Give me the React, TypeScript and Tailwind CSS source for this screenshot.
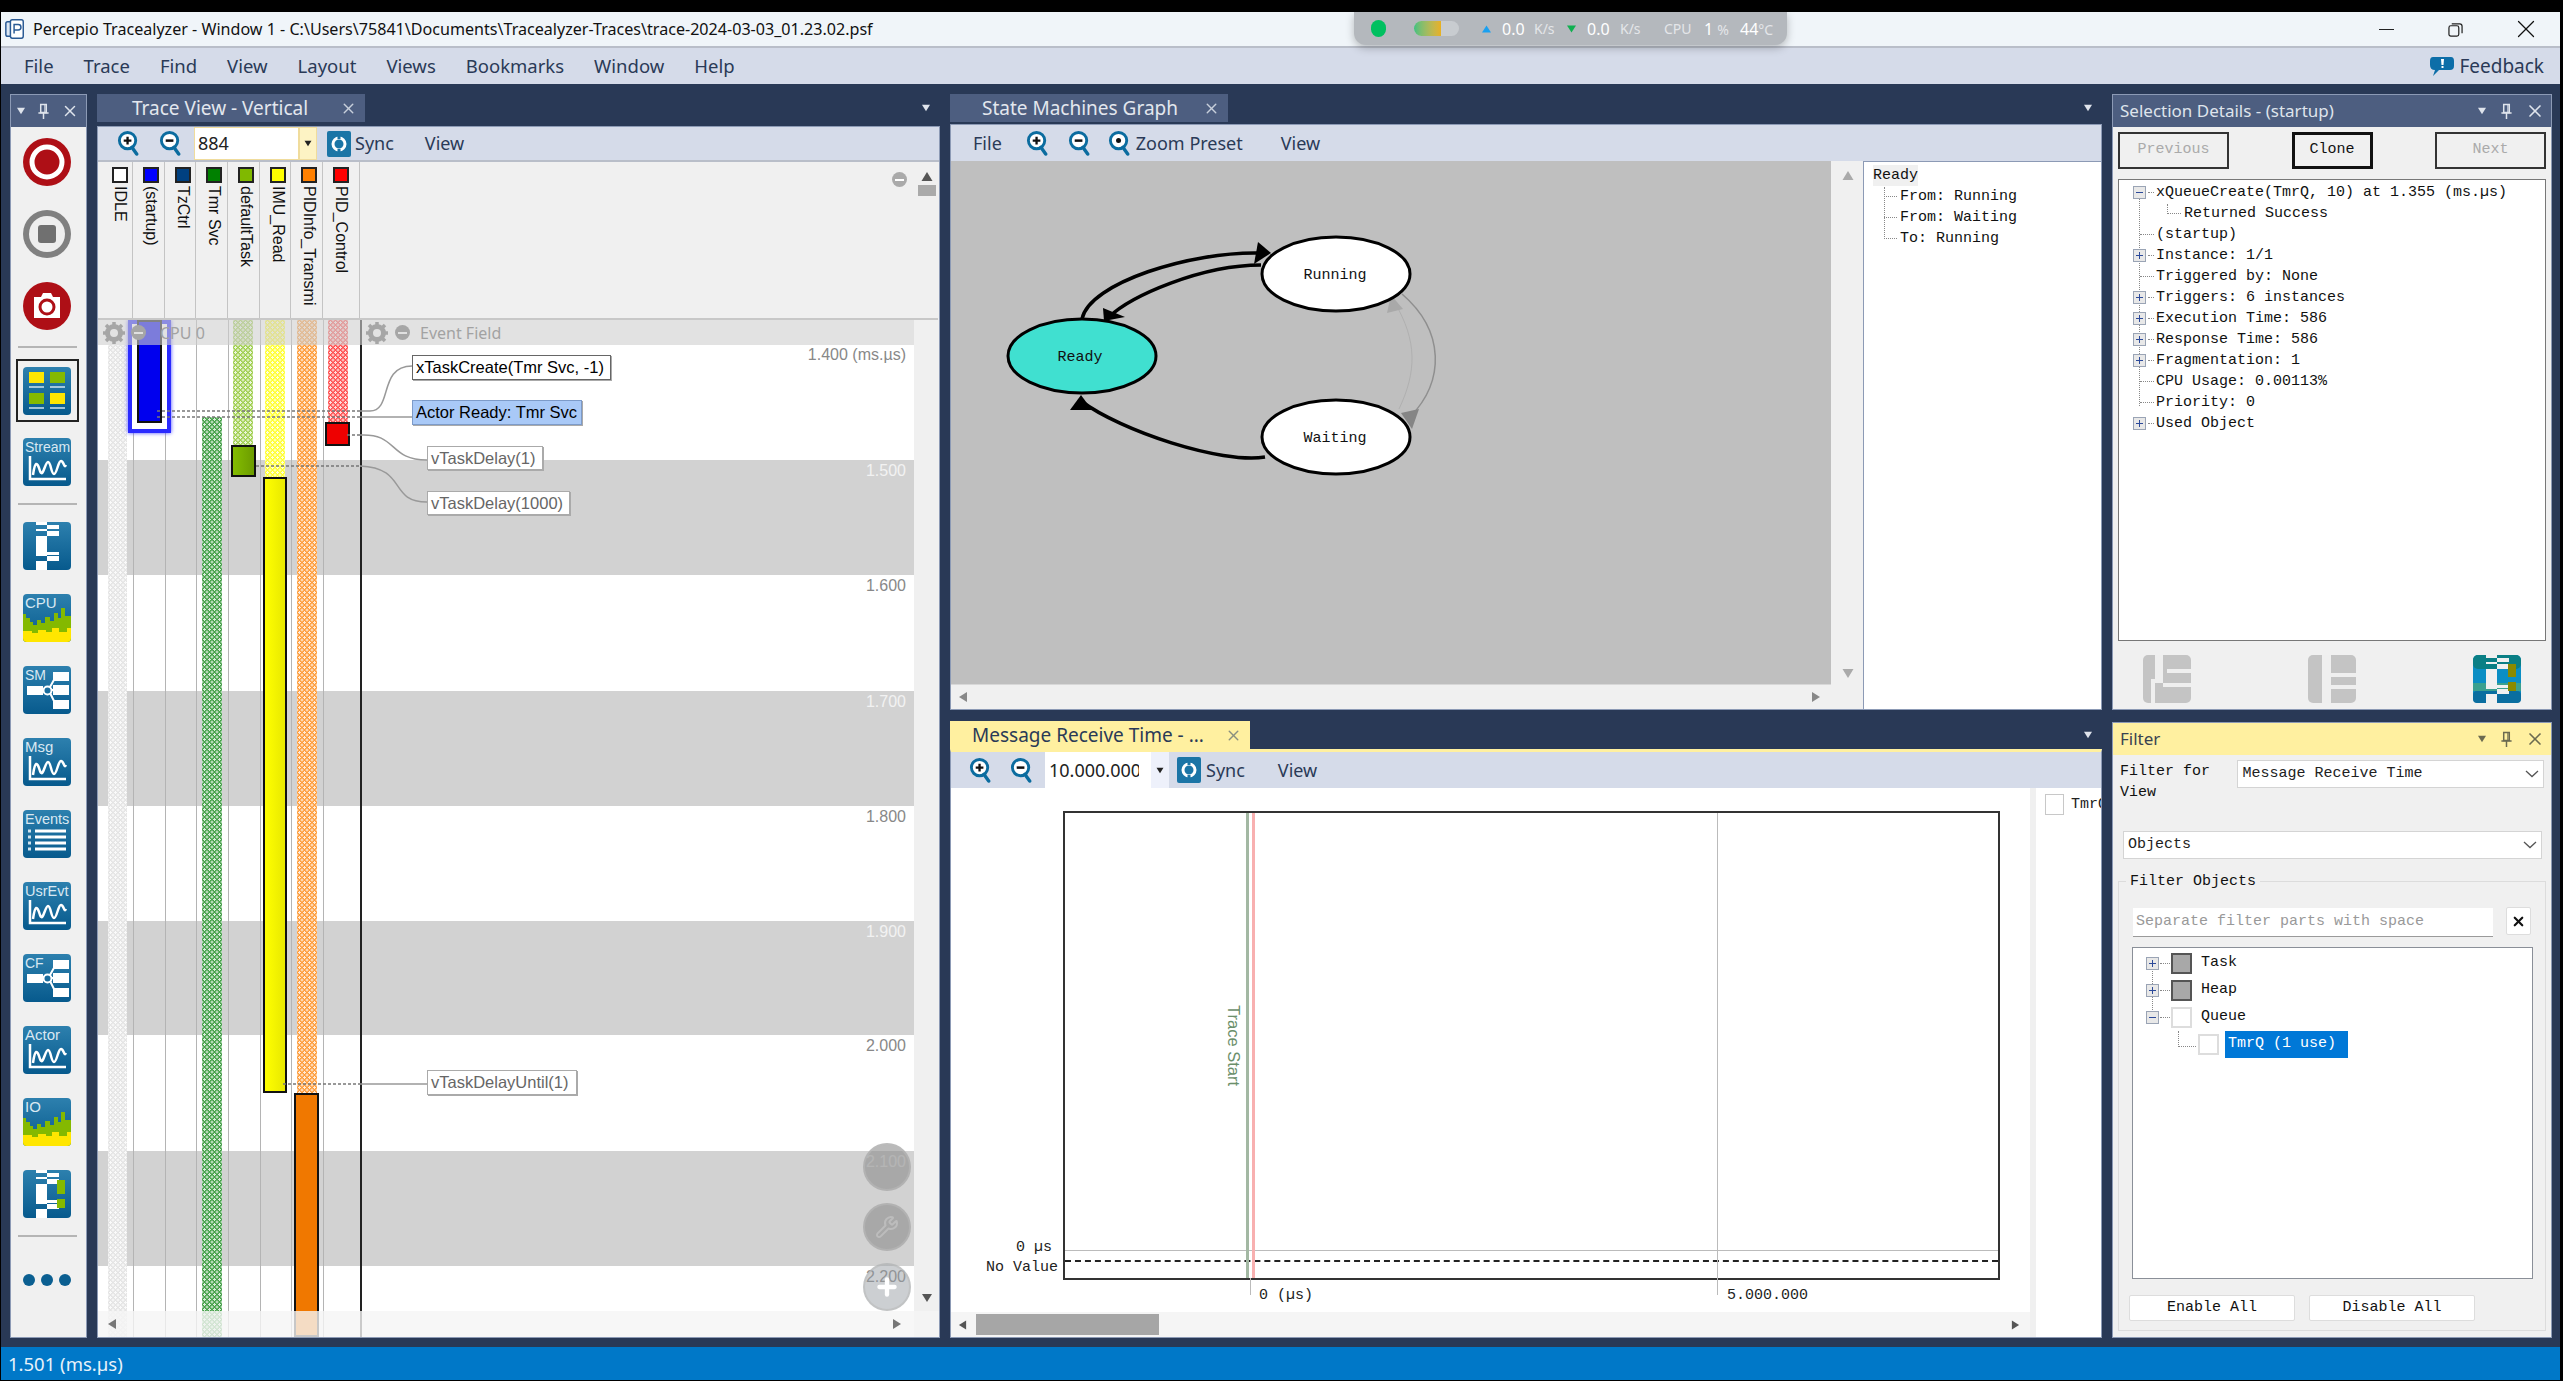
import React from 'react'
import { X, Wrench, Plus } from 'lucide-react'

const UI = "font-['Noto_Sans',sans-serif]"
const MONO = "font-['Liberation_Mono',monospace]"
const ARIAL = "font-['Liberation_Sans',Arial,sans-serif]"

function Tri({ dir, className }: { dir: 'up' | 'down' | 'left' | 'right'; className?: string }) {
  const pts = { up: '5,1 10,9 0,9', down: '0,1 10,1 5,9', left: '9,0 9,10 1,5', right: '1,0 1,10 9,5' }[dir]
  return (
    <svg viewBox="0 0 10 10" className={className} fill="currentColor">
      <polygon points={pts} />
    </svg>
  )
}

function PinIcon() {
  return (
    <svg viewBox="0 0 14 18" className="w-[13px] h-[17px]" fill="none" stroke="currentColor" strokeWidth="1.6">
      <path d="M4 1.5H10V10H4Z" />
      <path d="M1.5 10.5H12.5M7 10.5V17" />
      <path d="M8.5 2V10" strokeWidth="1.2" />
    </svg>
  )
}

function ZoomIcon({ kind }: { kind: 'plus' | 'minus' | 'dot' }) {
  return (
    <svg viewBox="0 0 24 26" className="w-[24px] h-[25px] shrink-0">
      <circle cx="10.5" cy="10" r="8.5" fill="#fff" stroke="#0b6c9f" strokeWidth="3" />
      <path d="M15 17 L20 24" stroke="#0b6c9f" strokeWidth="3.5" strokeLinecap="round" />
      {kind === 'plus' && <path d="M6.5 10h8M10.5 6v8" stroke="#111" strokeWidth="2.4" />}
      {kind === 'minus' && <path d="M6.5 10h8" stroke="#111" strokeWidth="2.6" />}
      {kind === 'dot' && <circle cx="10.5" cy="10" r="2.6" fill="#111" />}
    </svg>
  )
}

function SyncIcon() {
  return (
    <svg viewBox="0 0 24 26" className="w-[24px] h-[26px] shrink-0">
      <rect width="24" height="26" rx="2" fill="#1b75a6" />
      <circle cx="12" cy="13" r="6" fill="none" stroke="#fff" strokeWidth="3" />
      <path d="M12 3v5M12 18v5" stroke="#1b75a6" strokeWidth="3" />
    </svg>
  )
}

function Tile({ children, id = 'tile' }: { children?: React.ReactNode; id?: string }) {
  return (
    <svg viewBox="0 0 48 48" className="w-[48px] h-[48px] shrink-0 block">
      <defs>
        <linearGradient id={id} x1="0" y1="0" x2="0" y2="1">
          <stop offset="0" stopColor="#2d80ae" />
          <stop offset="1" stopColor="#075a8d" />
        </linearGradient>
      </defs>
      <rect width="48" height="48" rx="4" fill={`url(#${id})`} />
      {children}
    </svg>
  )
}

function Label({ t, size = 15 }: { t: string; size?: number }) {
  return (
    <text x="2" y="14" fontSize={size} fill="#d9e8f2" fontFamily="Liberation Sans, Arial, sans-serif">
      {t}
    </text>
  )
}

function Wave() {
  return (
    <g fill="none" stroke="#fff" strokeWidth="2.5">
      <path d="M7 18V41H43" />
      <path d="M10 37C12 23 14 23 17 33C20 41 22 24 25 24C28 24 28 36 31 36C34 36 35 23 38 23C41 23 41 31 43 27" />
    </g>
  )
}

function FlowTile({ t }: { t: string }) {
  return (
    <Tile>
      <Label t={t} size={14} />
      <g fill="#fff">
        <rect x="30" y="6" width="16" height="9" />
        <rect x="30" y="19" width="16" height="10" />
        <rect x="30" y="34" width="16" height="9" />
        <rect x="4" y="20" width="16" height="9" />
      </g>
      <circle cx="24.5" cy="24.5" r="4" fill="none" stroke="#fff" strokeWidth="2" />
      <path d="M27 21L32 12M28 24H31M27 27L32 37" stroke="#fff" strokeWidth="2" />
    </Tile>
  )
}

function TraceMark({ light = false }: { light?: boolean }) {
  return (
    <g fill={light ? '#f0f0f0' : '#fff'}>
      <rect x="13" y="0" width="11" height="3" />
      <rect x="24" y="3" width="12" height="4" />
      <rect x="13" y="7" width="11" height="2" />
      <rect x="24" y="9" width="12" height="5" />
      <rect x="13" y="14" width="11" height="12" />
      <rect x="24" y="30" width="12" height="3" />
      <rect x="13" y="26" width="11" height="8" />
      <rect x="24" y="34" width="12" height="5" />
      <rect x="13" y="39" width="11" height="9" />
    </g>
  )
}

function LoadTile({ t }: { t: string }) {
  return (
    <Tile>
      <Label t={t} />
      <path
        d="M0 20H3V24H7V28H10V31H14V26H18V29H22V23H27V27H31V19H35V24H38V14H42V22H48V44Q48 48 44 48H4Q0 48 0 44Z"
        fill="#84b900"
      />
      <path
        d="M0 37H9V39H15V36H23V38H29V34H36V38H44V34H48V44Q48 48 44 48H4Q0 48 0 44Z"
        fill="#ffe600"
      />
    </Tile>
  )
}

function RoundRed({ children, grey }: { children: React.ReactNode; grey?: boolean }) {
  return (
    <svg viewBox="0 0 48 48" className="w-[48px] h-[48px] shrink-0 block">
      <circle cx="24" cy="24" r="24" fill={grey ? '#808080' : '#ae0f16'} />
      {children}
    </svg>
  )
}

function Sep() {
  return <div className="w-[59px] h-[2px] bg-[#b5b5b5]" />
}

function Rail() {
  return (
    <div className="w-[77px] flex flex-col border border-[#8c9ab5] bg-[#f0f0f0]">
      <div className="h-[32px] bg-[#4d5e80] flex items-center justify-center gap-[11px] pr-[3px] text-[#dfe4ec]">
        <Tri dir="down" className="w-[10px] h-[8px]" />
        <PinIcon />
        <X size={18} />
      </div>
      <div className="flex flex-col items-center pt-[11px] pr-[3px]">
        <div className="flex flex-col gap-[24px]">
          <RoundRed>
            <circle cx="24" cy="24" r="15" fill="none" stroke="#fff" strokeWidth="5" />
          </RoundRed>
          <RoundRed grey>
            <circle cx="24" cy="24" r="18" fill="#eee" />
            <rect x="15" y="15" width="18" height="18" rx="3" fill="#707070" />
          </RoundRed>
          <RoundRed>
            <path d="M11 15H18L20 11H28L30 15H37V36H11Z" fill="#fff" />
            <circle cx="24" cy="25" r="7" fill="none" stroke="#ae0f16" strokeWidth="3" />
          </RoundRed>
        </div>
        <div className="mt-[16px]"><Sep /></div>
        <div className="mt-[11px] border-2 border-[#222] w-[63px] h-[63px] flex items-center justify-center">
          <Tile>
            <rect x="6" y="5" width="15" height="11" fill="#ffe600" />
            <rect x="27" y="5" width="15" height="11" fill="#84b900" />
            <rect x="6" y="26" width="15" height="11" fill="#84b900" />
            <rect x="27" y="26" width="15" height="11" fill="#ffe600" />
            <path d="M6 20H21M27 20H42M6 41H21M27 41H42" stroke="#cfe3ee" strokeWidth="1.5" />
          </Tile>
        </div>
        <div className="mt-[16px]">
          <Tile><Label t="Stream" size={14} /><Wave /></Tile>
        </div>
        <div className="mt-[17px]"><Sep /></div>
        <div className="mt-[17px] flex flex-col gap-[24px]">
          <Tile><TraceMark /></Tile>
          <LoadTile t="CPU" />
          <FlowTile t="SM" />
          <Tile><Label t="Msg" /><Wave /></Tile>
          <Tile>
            <Label t="Events" size={14.5} />
            <path d="M12 21H43M12 27H43M12 33H43M12 39H43" stroke="#fff" strokeWidth="3" />
            <path d="M5 21H8M5 27H8M5 33H8M5 39H8" stroke="#cfe3ee" strokeWidth="3" />
          </Tile>
          <Tile><Label t="UsrEvt" size={14.5} /><Wave /></Tile>
          <FlowTile t="CF" />
          <Tile><Label t="Actor" /><Wave /></Tile>
          <LoadTile t="IO" />
          <Tile>
            <TraceMark />
            <rect x="34" y="10" width="8" height="14" fill="#84b900" />
            <rect x="34" y="29" width="8" height="9" fill="#84b900" />
          </Tile>
        </div>
        <div className="mt-[17px]"><Sep /></div>
        <div className="mt-[37px] flex gap-[6px]">
          <div className="w-[12px] h-[12px] rounded-full bg-[#0b5f91]" />
          <div className="w-[12px] h-[12px] rounded-full bg-[#0b5f91]" />
          <div className="w-[12px] h-[12px] rounded-full bg-[#0b5f91]" />
        </div>
      </div>
    </div>
  )
}

function TabStrip({ title, tabWidth, yellow, closePad }: { title: string; tabWidth: string; yellow?: boolean; closePad: string }) {
  return (
    <div className="h-[28px] flex items-stretch justify-between shrink-0">
      <div
        className={`${tabWidth} flex items-center justify-between ${closePad} text-[19px] ${UI} ${
          yellow ? 'bg-[#fff0a0] text-[#2a3a57]' : 'bg-[#4d5e80] text-[#e3e7ee]'
        }`}
      >
        <span className="whitespace-nowrap">{title}</span>
        <X size={17} className={yellow ? 'text-[#8a8f80]' : 'text-[#c8cfdb]'} />
      </div>
      <div className="flex items-center pr-[9px] text-[#dfe4ec]">
        <Tri dir="down" className="w-[10px] h-[8px]" />
      </div>
    </div>
  )
}

const columns = [
  { name: 'IDLE', swatch: 'bg-white', width: 'w-[35px]', pad: 'pl-[14px]' },
  { name: '(startup)', swatch: 'bg-[#0000ff]', width: 'w-[32px]', pad: 'pl-[10px]' },
  { name: 'TzCtrl', swatch: 'bg-[#004080]', width: 'w-[31px]', pad: 'pl-[10px]' },
  { name: 'Tmr Svc', swatch: 'bg-[#008000]', width: 'w-[32px]', pad: 'pl-[10px]' },
  { name: 'defaultTask', swatch: 'bg-[#80b900]', width: 'w-[32px]', pad: 'pl-[10px]' },
  { name: 'IMU_Read', swatch: 'bg-[#ffff00]', width: 'w-[31px]', pad: 'pl-[10px]' },
  { name: 'PIDInfo_Transmi', swatch: 'bg-[#ff8000]', width: 'w-[32px]', pad: 'pl-[10px]' },
  { name: 'PID_Control', swatch: 'bg-[#ff0000]', width: 'w-[37px]', pad: 'pl-[10px]' },
]

const bands = [
  { h: 'h-[140px] pt-[25px]', grey: false, label: '1.400 (ms.µs)' },
  { h: 'h-[115px] pt-px', grey: true, label: '1.500' },
  { h: 'h-[116px] pt-px', grey: false, label: '1.600' },
  { h: 'h-[115px] pt-px', grey: true, label: '1.700' },
  { h: 'h-[115px] pt-px', grey: false, label: '1.800' },
  { h: 'h-[114px] pt-px', grey: true, label: '1.900' },
  { h: 'h-[116px] pt-px', grey: false, label: '2.000' },
  { h: 'h-[115px] pt-px', grey: true, label: '2.100' },
  { h: 'flex-1 pt-px', grey: false, label: '2.200' },
]

const DOTS =
  'bg-[radial-gradient(circle,rgba(255,255,255,0.8)_1px,transparent_1.3px),radial-gradient(circle,rgba(255,255,255,0.8)_1px,transparent_1.3px)] bg-[length:5px_5px] bg-[position:0_0,2.5px_2.5px]'

const dotBars = [
  { c: 'left-[10px] top-[25px] w-[19px] h-[992px] bg-[#e4e4e4]' },
  { c: 'left-[104px] top-[97px] w-[20px] h-[920px] bg-[#43a047]' },
  { c: 'left-[135px] top-0 w-[20px] h-[125px] bg-[#a0cf50]' },
  { c: 'left-[167px] top-0 w-[20px] h-[157px] bg-[#ffff30]' },
  { c: 'left-[199px] top-0 w-[20px] h-[773px] bg-[#ff9c3a]' },
  { c: 'left-[230px] top-0 w-[20px] h-[102px] bg-[#ff5050]' },
]

const lines = [
  'left-[35px]', 'left-[67px]', 'left-[98px]', 'left-[130px]', 'left-[162px]', 'left-[193px]', 'left-[225px]',
]

function TaskLabel({ text, className }: { text: string; className: string }) {
  return (
    <div className={`absolute flex items-center pl-[3px] text-[16.5px] whitespace-nowrap border shadow-[1px_1px_0_#aaa] ${ARIAL} ${className}`}>
      {text}
    </div>
  )
}

function TracePanel() {
  return (
    <div className="w-[843px] flex flex-col">
      <TabStrip title="Trace View - Vertical" tabWidth="w-[268px]" closePad="pl-[35px] pr-[8px]" />
      <div className="flex-1 flex flex-col mt-[4px] border border-[#8c9ab5] bg-[#f0f0f0] relative min-h-0">
        <div className={`h-[35px] shrink-0 bg-[#d5dbe9] border-b-2 border-[#b9bec9] flex items-center text-[#2a3a57] text-[18px] ${UI}`}>
          <div className="ml-[19px]"><ZoomIcon kind="plus" /></div>
          <div className="ml-[18px]"><ZoomIcon kind="minus" /></div>
          <div className="ml-[11px] w-[105px] h-full bg-white border border-[#f0dc9c] flex items-center pl-[3px] text-[#222]">884</div>
          <div className="w-[18px] h-full bg-[#fdf3c4] border border-[#f0dc9c] flex items-center justify-center text-[#222]">
            <Tri dir="down" className="w-[8px] h-[7px]" />
          </div>
          <div className="ml-[10px]"><SyncIcon /></div>
          <span className="ml-[4px]">Sync</span>
          <span className="ml-[31px]">View</span>
        </div>
        <div className="h-[158px] shrink-0 flex border-b-2 border-[#c8c8c8] mr-[1px]">
          {columns.map((c) => (
            <div key={c.name} className={`${c.width} ${c.pad} shrink-0 border-r border-[#c4c4c4] pt-[5px] flex flex-col`}>
              <div className={`w-[16px] h-[16px] border-2 border-[#222] ${c.swatch}`} />
              <div className={`mt-[3px] [writing-mode:vertical-rl] w-[16px] text-[16px] leading-[16px] whitespace-nowrap text-[#111] ${ARIAL}`}>
                {c.name}
              </div>
            </div>
          ))}
          <div className="flex-1 relative">
            <div className="absolute top-[10px] right-[31px] w-[15px] h-[15px] rounded-full bg-[#aaa] flex items-center justify-center">
              <div className="w-[9px] h-[2px] bg-white" />
            </div>
          </div>
        </div>
        <div className="flex-1 flex min-h-0">
          <div className="w-[816px] relative overflow-hidden bg-white">
            <div className="h-full flex flex-col">
              {bands.map((b) => (
                <div
                  key={b.label}
                  className={`${b.h} shrink-0 text-right pr-[8px] text-[16px] leading-[20px] ${ARIAL} ${b.grey ? 'bg-[#d2d2d2] text-[#f2f2f2]' : 'text-[#888]'}`}
                >
                  {b.label}
                </div>
              ))}
            </div>
            {lines.map((l) => (
              <div key={l} className={`absolute top-0 bottom-0 w-px bg-[#b4b4b4] ${l}`} />
            ))}
            {dotBars.map((d) => (
              <div key={d.c} className={`absolute ${d.c} ${DOTS}`} />
            ))}
            <div className="absolute left-[30px] top-0 w-[43px] h-[113px] bg-white border-[4px] border-[#2a2aff] shadow-[0_0_4px_#4a4aff]" />
            <div className="absolute left-[39px] top-0 w-[25px] h-[103px] bg-[#0000ee] border-2 border-[#111]" />
            <div className="absolute left-[133px] top-[125px] w-[25px] h-[32px] border-2 border-[#111] bg-gradient-to-r from-[#84bd00] to-[#6c9c00]" />
            <div className="absolute left-[165px] top-[157px] w-[24px] h-[616px] border-2 border-[#111] bg-gradient-to-r from-[#ffff00] to-[#e8e800]" />
            <div className="absolute left-[196px] top-[773px] w-[25px] h-[244px] border-2 border-[#111] bg-[#f07800]" />
            <div className="absolute left-[227px] top-[102px] w-[25px] h-[24px] border-2 border-[#111] bg-[#ee0000]" />
            <div className="absolute left-[262px] top-0 bottom-0 w-[2px] bg-[#222]" />
            <svg className="absolute left-0 top-0 w-[816px] h-[1017px]" fill="none" strokeWidth="1.5">
              <g stroke="#777" strokeDasharray="3 2">
                <path d="M59 91H262M59 97H262M249 115H262M158 146H262M185 764H262" />
              </g>
              <g stroke="#999">
                <path d="M262 91H272C295 91 280 46 314 46" />
                <path d="M262 97H314" />
                <path d="M262 115C300 113 290 140 329 140" />
                <path d="M262 146C310 148 290 182 329 182" />
                <path d="M262 764H329" />
              </g>
            </svg>
            <TaskLabel text="xTaskCreate(Tmr Svc, -1)" className="left-[314px] top-[35px] w-[199px] h-[25px] bg-white border-[#666] text-black" />
            <TaskLabel text="Actor Ready: Tmr Svc" className="left-[314px] top-[80px] w-[170px] h-[25px] bg-[#a9c9f7] border-[#7d9bc9] text-black" />
            <TaskLabel text="vTaskDelay(1)" className="left-[329px] top-[126px] w-[116px] h-[24px] bg-white border-[#aaa] text-[#666]" />
            <TaskLabel text="vTaskDelay(1000)" className="left-[329px] top-[171px] w-[143px] h-[24px] bg-white border-[#aaa] text-[#666]" />
            <TaskLabel text="vTaskDelayUntil(1)" className="left-[329px] top-[750px] w-[150px] h-[25px] bg-white border-[#aaa] text-[#666]" />
            <div className={`absolute left-0 top-0 w-full h-[25px] bg-[#cfcfcf]/60 flex items-center text-[#a2a2a2] text-[16px] ${UI}`}>
              <Gear left="left-[3px]" />
              <Dash left="left-[33px]" />
              <span className="absolute left-[62px]">CPU 0</span>
              <Gear left="left-[266px]" />
              <Dash left="left-[297px]" />
              <span className="absolute left-[322px]">Event Field</span>
            </div>
            <div className="absolute left-[765px] top-[823px] w-[48px] h-[48px] rounded-full bg-[#8c8c8c]/60 border-2 border-[#bbb]/50" />
            <div className="absolute left-[765px] top-[883px] w-[48px] h-[48px] rounded-full bg-[#8c8c8c]/60 border-2 border-[#bbb]/50 flex items-center justify-center text-[#bcbcbc]">
              <Wrench size={24} />
            </div>
            <div className="absolute left-[765px] top-[943px] w-[48px] h-[48px] rounded-full bg-[#9aa0a6]/50 border-2 border-[#bbb]/60 flex items-center justify-center text-white">
              <Plus size={26} strokeWidth={4} />
            </div>
          </div>
          <div className="flex-1 relative">
            <Tri dir="up" className="absolute left-[7px] -top-[149px] w-[12px] h-[11px] text-[#555]" />
            <div className="absolute left-[4px] -top-[135px] w-[18px] h-[11px] bg-[#aaa]" />
            <Tri dir="down" className="absolute left-[7px] top-[973px] w-[12px] h-[10px] text-[#555]" />
          </div>
        </div>
        <div className="absolute left-0 right-0 bottom-0 h-[26px] bg-[#f5f5f5]/80 flex items-center justify-between px-[9px] text-[#777]">
          <Tri dir="left" className="w-[10px] h-[14px]" />
          <Tri dir="right" className="w-[10px] h-[14px] mr-[28px]" />
        </div>
      </div>
    </div>
  )
}

function Gear({ left }: { left: string }) {
  return (
    <svg viewBox="0 0 24 24" className={`absolute ${left} w-[26px] h-[24px]`}>
      <circle cx="12" cy="12" r="6.5" fill="none" stroke="#a6a6a6" strokeWidth="5" />
      <path d="M12 1v5M12 18v5M1 12h5M18 12h5M4 4l4 4M16 16l4 4M20 4l-4 4M8 16l-4 4" stroke="#a6a6a6" strokeWidth="3.5" />
    </svg>
  )
}

function Dash({ left }: { left: string }) {
  return (
    <div className={`absolute ${left} w-[15px] h-[15px] rounded-full bg-[#a6a6a6] flex items-center justify-center`}>
      <div className="w-[9px] h-[2px] bg-[#e0e0e0]" />
    </div>
  )
}

function StateGraph() {
  return (
    <svg className="w-[880px] h-[523px] block" fill="none">
      <g stroke="#000" strokeWidth="3.5">
        <path d="M131 158C138 122 240 90 310 92" />
        <path d="M310 104C250 104 180 135 158 156" />
        <path d="M314 296C270 303 170 270 130 240" />
      </g>
      <g fill="#000">
        <polygon points="307,81 320,92 303,103" />
        <polygon points="152,147 174,156 153,160" />
        <polygon points="130,234 119,249 141,249" />
      </g>
      <path d="M448 248C466 210 466 180 444 142" stroke="#b0b0b0" strokeWidth="1" />
      <polygon points="440,134 436,152 452,148" fill="#a9a9a9" />
      <path d="M451 133C494 170 494 220 459 256" stroke="#8f8f8f" strokeWidth="1.5" />
      <polygon points="461,268 450,252 468,248" fill="#858585" />
      <ellipse cx="131" cy="195" rx="74" ry="37" fill="#40e0d0" stroke="#000" strokeWidth="3" />
      <ellipse cx="385" cy="113" rx="74" ry="37" fill="#fff" stroke="#000" strokeWidth="3" />
      <ellipse cx="385" cy="276" rx="74" ry="37" fill="#fff" stroke="#000" strokeWidth="3" />
      <g fill="#111" fontSize="15" fontFamily="Liberation Mono, monospace" textAnchor="middle">
        <text x="129" y="200">Ready</text>
        <text x="384" y="118">Running</text>
        <text x="384" y="281">Waiting</text>
      </g>
    </svg>
  )
}

function StatePanel() {
  return (
    <div className="h-[616px] shrink-0 flex flex-col">
      <TabStrip title="State Machines Graph" tabWidth="w-[278px]" closePad="pl-[32px] pr-[8px]" />
      <div className="mt-[2px] flex-1 flex flex-col border border-[#8c9ab5] min-h-0">
        <div className={`h-[36px] shrink-0 bg-[#d5dbe9] flex items-center text-[#2a3a57] text-[18px] ${UI}`}>
          <span className="ml-[22px]">File</span>
          <div className="ml-[24px]"><ZoomIcon kind="plus" /></div>
          <div className="ml-[18px]"><ZoomIcon kind="minus" /></div>
          <div className="ml-[16px]"><ZoomIcon kind="dot" /></div>
          <span className="ml-[4px]">Zoom Preset</span>
          <span className="ml-[38px]">View</span>
        </div>
        <div className="flex-1 flex min-h-0">
          <div className="w-[880px] flex flex-col shrink-0">
            <div className="h-[523px] bg-[#bfbfbf] shrink-0"><StateGraph /></div>
            <div className="flex-1 bg-[#f0f0f0] border-t border-[#d8d8d8] flex items-center justify-between px-[7px] text-[#888]">
              <Tri dir="left" className="w-[10px] h-[14px]" />
              <Tri dir="right" className="w-[10px] h-[14px] mr-[3px]" />
            </div>
          </div>
          <div className="w-[32px] shrink-0 bg-[#f0f0f0] relative text-[#aaa]">
            <Tri dir="up" className="absolute left-[11px] top-[9px] w-[12px] h-[11px]" />
            <Tri dir="down" className="absolute left-[11px] top-[507px] w-[12px] h-[11px]" />
          </div>
          <div className={`flex-1 bg-white border-l border-t border-[#8c9ab5] relative text-[15px] leading-[21px] text-[#111] ${MONO}`}>
            <div className="ml-[9px] mt-[3px] w-fit bg-[#f0f0f0]">Ready</div>
            <div className="absolute left-[20px] top-[25px] h-[52px] border-l border-dotted border-[#888]" />
            {['From: Running', 'From: Waiting', 'To: Running'].map((t) => (
              <div key={t} className="flex items-center pl-[20px]">
                <span className="w-[13px] border-t border-dotted border-[#888] mr-[3px]" />
                {t}
              </div>
            ))}
          </div>
        </div>
      </div>
    </div>
  )
}

function MessagePanel() {
  return (
    <div className="flex-1 flex flex-col min-h-0">
      <TabStrip title="Message Receive Time - ..." tabWidth="w-[300px]" yellow closePad="pl-[22px] pr-[8px]" />
      <div className="flex-1 flex flex-col border-x border-b border-[#8c9ab5] border-t-[3px] border-t-[#fff0a0] min-h-0">
        <div className={`h-[36px] shrink-0 bg-[#d5dbe9] flex items-center text-[#2a3a57] text-[18px] ${UI}`}>
          <div className="ml-[18px]"><ZoomIcon kind="plus" /></div>
          <div className="ml-[17px]"><ZoomIcon kind="minus" /></div>
          <div className="ml-[11px] w-[106px] h-full bg-white flex items-center pl-[4px] text-[#222]">
            <span className="w-[90px] overflow-hidden whitespace-nowrap">10.000.000</span>
          </div>
          <div className="w-[18px] h-full bg-[#eef1fb] flex items-center justify-center text-[#222]">
            <Tri dir="down" className="w-[8px] h-[7px]" />
          </div>
          <div className="ml-[8px]"><SyncIcon /></div>
          <span className="ml-[5px]">Sync</span>
          <span className="ml-[33px]">View</span>
        </div>
        <div className="flex-1 flex min-h-0">
          <div className="w-[1079px] shrink-0 flex flex-col">
            <div className="h-[524px] shrink-0 bg-white relative pt-[23px] pl-[112px]">
              <div className="w-[937px] h-[469px] border-2 border-[#333] relative">
                <div className="absolute left-0 right-0 top-[437px] h-px bg-[#bbb]" />
                <div className="absolute left-0 right-0 top-[447px] border-t-2 border-dashed border-[#222]" />
                <div className="absolute top-0 bottom-0 left-[181px] w-[3px] bg-[#a3b8a3]" />
                <div className="absolute top-0 bottom-0 left-[187px] w-[3px] bg-[#f8b0b0]" />
                <div className="absolute top-0 bottom-0 left-[652px] w-px bg-[#bbb]" />
                <div className={`absolute left-[159px] top-[192px] [writing-mode:vertical-rl] text-[16.5px] leading-[20px] text-[#6b8f6b] whitespace-nowrap ${ARIAL}`}>
                  Trace Start
                </div>
                <div className="absolute left-[185px] top-[465px] h-[17px] w-px bg-[#bbb]" />
                <div className="absolute left-[652px] top-[465px] h-[17px] w-px bg-[#bbb]" />
              </div>
              <div className={`absolute left-[20px] top-[450px] w-[93px] text-right text-[15px] leading-[20px] text-[#222] pr-[6px] ${MONO}`}>
                <div className="pr-[6px]">0 µs</div>
                <div>No Value</div>
              </div>
              <span className={`absolute left-[308px] top-[497px] text-[15px] text-[#222] ${MONO}`}>0 (µs)</span>
              <span className={`absolute left-[776px] top-[497px] text-[15px] text-[#222] ${MONO}`}>5.000.000</span>
            </div>
            <div className="flex-1 bg-[#f5f5f5] flex items-center text-[#555]">
              <Tri dir="left" className="ml-[7px] w-[9px] h-[14px]" />
              <div className="ml-[9px] w-[183px] h-[21px] bg-[#a6a6a6]" />
              <div className="flex-1" />
              <Tri dir="right" className="mr-[10px] w-[9px] h-[14px]" />
            </div>
          </div>
          <div className="w-[6px] shrink-0 bg-[#f0f0f0]" />
          <div className={`flex-1 bg-white flex items-start pt-[6px] pl-[9px] overflow-hidden text-[15px] whitespace-nowrap text-[#222] ${MONO}`}>
            <div className="w-[19px] h-[21px] shrink-0 border border-[#c8c8c8] mr-[7px]" />
            TmrQ
          </div>
        </div>
      </div>
    </div>
  )
}

function PanelHeader({ title, yellow }: { title: string; yellow?: boolean }) {
  return (
    <div
      className={`h-[32px] shrink-0 flex items-center justify-between pl-[7px] pr-[6px] text-[17px] ${UI} ${
        yellow ? 'bg-[#fff0a0] text-[#3a4350]' : 'bg-[#4d5e80] text-[#dfe4ec]'
      }`}
    >
      <span>{title}</span>
      <div className={`flex items-center gap-[12px] ${yellow ? 'text-[#6b6a50]' : 'text-[#dfe4ec]'}`}>
        <Tri dir="down" className="w-[12px] h-[8px]" />
        <PinIcon />
        <X size={20} />
      </div>
    </div>
  )
}

function Expander({ open }: { open?: boolean }) {
  return (
    <div className="w-[13px] h-[13px] shrink-0 border border-[#9aa4b5] bg-[#e8e8e8] relative">
      <div className="absolute left-[2px] top-[5px] w-[7px] h-px bg-[#2c4a9a]" />
      {!open && <div className="absolute left-[5px] top-[2px] w-px h-[7px] bg-[#2c4a9a]" />}
    </div>
  )
}

const details = [
  { kind: 'open', text: 'xQueueCreate(TmrQ, 10) at 1.355 (ms.µs)' },
  { kind: 'sub', text: 'Returned Success' },
  { kind: 'leaf', text: '(startup)' },
  { kind: 'plus', text: 'Instance: 1/1' },
  { kind: 'leaf', text: 'Triggered by: None' },
  { kind: 'plus', text: 'Triggers: 6 instances' },
  { kind: 'plus', text: 'Execution Time: 586' },
  { kind: 'plus', text: 'Response Time: 586' },
  { kind: 'plus', text: 'Fragmentation: 1' },
  { kind: 'leaf', text: 'CPU Usage: 0.00113%' },
  { kind: 'leaf', text: 'Priority: 0' },
  { kind: 'plus', text: 'Used Object' },
]

function GreyTile({ flip }: { flip?: boolean }) {
  return (
    <svg viewBox="0 0 48 48" className="w-[48px] h-[48px] block">
      <rect width="48" height="48" rx="5" fill="#c4c4c4" />
      {flip ? (
        <path d="M14 0H23V18H48V22H23V30H48V34H23V48H14Z" fill="#efefef" />
      ) : (
        <path d="M12 0H20V28H12V48H8V24H12ZM24 14H48V18H24ZM20 28H48V32H20Z" fill="#efefef" />
      )}
    </svg>
  )
}

function DetailsPanel() {
  return (
    <div className="h-[616px] shrink-0 flex flex-col border border-[#8c9ab5] bg-[#f0f0f0]">
      <PanelHeader title="Selection Details - (startup)" />
      <div className={`flex justify-between px-[5px] pt-[5px] text-[15px] ${MONO}`}>
        <div className="w-[111px] h-[37px] border-2 border-[#333] flex items-center justify-center text-[#aaa]">Previous</div>
        <div className="w-[81px] h-[37px] border-[3px] border-[#111] flex items-center justify-center text-[#111]">Clone</div>
        <div className="w-[111px] h-[37px] border-2 border-[#333] flex items-center justify-center text-[#aaa]">Next</div>
      </div>
      <div className={`mx-[5px] mt-[10px] h-[462px] shrink-0 bg-white border border-[#777] pt-[2px] relative text-[15px] leading-[21px] text-[#111] ${MONO}`}>
        <div className="absolute left-[20px] top-[18px] h-[208px] border-l border-dotted border-[#888]" />
        {details.map((d) => (
          <div key={d.text} className="h-[21px] flex items-center pl-[14px] whitespace-nowrap relative">
            {(d.kind === 'open' || d.kind === 'plus') && <Expander open={d.kind === 'open'} />}
            {(d.kind === 'open' || d.kind === 'plus') && <span className="w-[6px] border-t border-dotted border-[#888] mx-[2px]" />}
            {d.kind === 'leaf' && <span className="ml-[7px] w-[14px] border-t border-dotted border-[#888] mr-[2px]" />}
            {d.kind === 'sub' && <span className="ml-[34px] w-[14px] h-[10px] -mt-[10px] border-l border-b border-dotted border-[#888] mr-[3px]" />}
            {d.text}
          </div>
        ))}
      </div>
      <div className="flex-1 flex justify-between px-[30px] pt-[14px]">
        <GreyTile />
        <GreyTile flip />
        <svg viewBox="0 0 48 48" className="w-[48px] h-[48px] block">
          <rect width="48" height="48" rx="5" fill="#0a8ec4" />
          <rect width="48" height="14" rx="5" fill="#0a7f85" />
          <rect y="28" width="48" height="8" fill="#3aa08f" />
          <rect y="36" width="48" height="12" rx="4" fill="#0a6ea0" />
          <TraceMark light />
          <rect x="35" y="9" width="8" height="13" fill="#8a8a00" />
          <rect x="35" y="27" width="8" height="9" fill="#8a8a00" />
        </svg>
      </div>
    </div>
  )
}

function Check({ on, className }: { on?: boolean; className?: string }) {
  return (
    <div className={`w-[21px] h-[21px] shrink-0 border-2 ${on ? 'bg-[#a8a8a8] border-[#555]' : 'bg-white border-[#ddd]'} ${className ?? ''}`} />
  )
}

function Dropdown({ text, className }: { text: string; className: string }) {
  return (
    <div className={`h-[28px] bg-white border border-[#d4d4d4] flex items-center justify-between pl-[4px] pr-[4px] text-[15px] text-[#222] ${className}`}>
      <span>{text}</span>
      <svg viewBox="0 0 14 8" className="w-[14px] h-[8px]" fill="none" stroke="#555" strokeWidth="1.3">
        <path d="M1 1L7 6.5L13 1" />
      </svg>
    </div>
  )
}

function FilterPanel() {
  return (
    <div className={`flex-1 flex flex-col border border-[#8c9ab5] bg-[#f0f0f0] mt-[1px] min-h-0 text-[15px] text-[#111] ${MONO}`}>
      <PanelHeader title="Filter" yellow />
      <div className="flex h-[62px] shrink-0 px-[7px] pt-[5px]">
        <div className="w-[118px] leading-[21px] pt-[1px]">Filter for View</div>
        <Dropdown text="Message Receive Time" className="w-[308px]" />
      </div>
      <Dropdown text="Objects" className="mx-[10px] w-[419px] mt-[14px] shrink-0" />
      <div className="mx-[5px] mt-[22px] h-[450px] shrink-0 border border-[#dcdcdc] relative">
        <span className="absolute left-[7px] -top-[11px] px-[4px] bg-[#f0f0f0] leading-[21px]">Filter Objects</span>
        <div className="flex items-start pl-[14px] pt-[26px]">
          <div className="w-[360px] h-[29px] bg-white border-b border-[#9a9a9a] flex items-center pl-[3px] text-[#999]">
            Separate filter parts with space
          </div>
          <div className="ml-[13px] -mt-[1px] w-[25px] h-[28px] bg-white border border-[#ddd] rounded-[2px] flex items-center justify-center text-[#111]">
            <X size={15} strokeWidth={3.5} />
          </div>
        </div>
        <div className="ml-[13px] mt-[10px] w-[401px] h-[332px] bg-white border border-[#8a8f98] relative pt-[2px]">
          <div className="absolute left-[19px] top-[20px] h-[50px] border-l border-dotted border-[#888]" />
          <div className="h-[27px] flex items-center pl-[13px]">
            <Expander /><span className="w-[10px] border-t border-dotted border-[#888] mx-[1px] mr-[1px]" />
            <Check on /><span className="ml-[9px]">Task</span>
          </div>
          <div className="h-[27px] flex items-center pl-[13px]">
            <Expander /><span className="w-[10px] border-t border-dotted border-[#888] mx-[1px] mr-[1px]" />
            <Check on /><span className="ml-[9px]">Heap</span>
          </div>
          <div className="h-[27px] flex items-center pl-[13px]">
            <Expander open /><span className="w-[10px] border-t border-dotted border-[#888] mx-[1px] mr-[1px]" />
            <Check /><span className="ml-[9px]">Queue</span>
          </div>
          <div className="h-[27px] flex items-center pl-[45px]">
            <span className="w-[18px] h-[16px] -mt-[12px] border-l border-b border-dotted border-[#888] mr-[2px]" />
            <Check />
            <span className="ml-[6px] h-[27px] w-[123px] bg-[#0078d7] text-white flex items-center pl-[3px]">TmrQ (1 use)</span>
          </div>
        </div>
        <div className="flex gap-[14px] pl-[10px] mt-[16px]">
          <div className="w-[166px] h-[26px] bg-white border border-[#ddd] rounded-[2px] flex items-center justify-center">Enable All</div>
          <div className="w-[166px] h-[26px] bg-white border border-[#ddd] rounded-[2px] flex items-center justify-center">Disable All</div>
        </div>
      </div>
    </div>
  )
}

function SystemWidget() {
  return (
    <div className={`absolute left-[1354px] top-[12px] w-[433px] h-[33px] rounded-b-[12px] bg-[#b4b8bd] shadow-[0_3px_8px_rgba(0,0,0,0.25)] flex items-center text-white text-[16px] ${UI}`}>
      <div className="ml-[17px] w-[15px] h-[17px] rounded-full bg-[#00c060]" />
      <div className="ml-[28px] w-[45px] h-[15px] rounded-full bg-[#c8ccd0] overflow-hidden">
        <div className="w-[27px] h-full bg-gradient-to-r from-[#3cc080] to-[#e8b020]" />
      </div>
      <Tri dir="up" className="ml-[23px] w-[9px] h-[12px] text-[#1aa0f0]" />
      <span className="ml-[11px] w-[23px]">0.0</span>
      <span className="ml-[9px] w-[22px] text-[14px] text-[#e4e6e9]">K/s</span>
      <Tri dir="down" className="ml-[11px] w-[9px] h-[12px] text-[#10b050]" />
      <span className="ml-[11px] w-[23px]">0.0</span>
      <span className="ml-[10px] w-[22px] text-[14px] text-[#e4e6e9]">K/s</span>
      <span className="ml-[22px] w-[30px] text-[14px] text-[#e4e6e9]">CPU</span>
      <span className="ml-[10px] w-[26px]">1 <span className="text-[14px] text-[#e4e6e9]">%</span></span>
      <span className="ml-[10px]">44<span className="text-[14px] text-[#e4e6e9]">°C</span></span>
    </div>
  )
}

export default function App() {
  return (
    <div className="relative w-[2563px] h-[1381px] bg-black overflow-hidden flex flex-col pt-[12px] pl-px pr-[3px] pb-px">
      <SystemWidget />
      <div className={`h-[36px] shrink-0 bg-[#f0f5f9] border-b-2 border-[#b9bec9] flex items-center text-[16.1px] text-[#111] ${UI}`}>
        <svg viewBox="0 0 24 24" className="ml-[3px] w-[22px] h-[22px] shrink-0" fill="none" stroke="#2a5a94" strokeWidth="1.6">
          <rect x="2" y="4" width="14" height="16" rx="2" fill="#dbe6f2" />
          <rect x="7" y="2" width="14" height="20" rx="2" fill="#fff" />
          <path d="M11 17V7H15.5A3 3 0 0 1 15.5 13H11" />
        </svg>
        <span className="ml-[7px] whitespace-nowrap">
          Percepio Tracealyzer - Window 1 - C:\Users\75841\Documents\Tracealyzer-Traces\trace-2024-03-03_01.23.02.psf
        </span>
        <div className="ml-auto flex items-center text-[#111]">
          <div className="w-[15px] h-px bg-[#222] mr-[54px]" />
          <svg viewBox="0 0 16 16" className="w-[15px] h-[15px] mr-[48px]" fill="none" stroke="#222" strokeWidth="1.3">
            <rect x="1" y="4" width="10.5" height="11" rx="2" />
            <path d="M4 2H12.5A2.5 2.5 0 0 1 15 4.5V12" />
          </svg>
          <X size={30} strokeWidth={1} className="mr-[19px]" />
        </div>
      </div>
      <div className={`h-[36px] shrink-0 bg-[#d5dbe9] flex items-center pl-[23px] gap-[30px] text-[18.5px] text-[#2a3a57] ${UI}`}>
        {['File', 'Trace', 'Find', 'View', 'Layout', 'Views', 'Bookmarks', 'Window', 'Help'].map((m) => (
          <span key={m}>{m}</span>
        ))}
        <div className="ml-auto flex items-center pr-[16px] gap-[5px] text-[19px] text-[#2a3a57]">
          <svg viewBox="0 0 24 22" className="w-[24px] h-[22px]">
            <path d="M3 2H21Q24 2 24 6V11Q24 15 20 15H9L3 21L5 15Q0 15 0 10V6Q0 2 3 2Z" fill="#0d6ea8" />
            <path d="M11 4H14L13.5 10H11.5ZM11.5 11H13.5V13H11.5Z" fill="#fff" />
          </svg>
          <span>Feedback</span>
        </div>
      </div>
      <div className="flex-1 min-h-0 bg-[#293956] flex gap-[10px] pl-[9px] pr-[8px] pt-[10px] pb-[9px]">
        <Rail />
        <TracePanel />
        <div className="w-[1152px] flex flex-col gap-[11px]">
          <StatePanel />
          <MessagePanel />
        </div>
        <div className="w-[440px] flex flex-col gap-[11px]">
          <DetailsPanel />
          <FilterPanel />
        </div>
      </div>
      <div className={`h-[33px] shrink-0 bg-[#0078c8] flex items-center pl-[7px] text-[18.5px] text-[#e8f2fa] ${UI}`}>
        1.501 (ms.µs)
      </div>
    </div>
  )
}
